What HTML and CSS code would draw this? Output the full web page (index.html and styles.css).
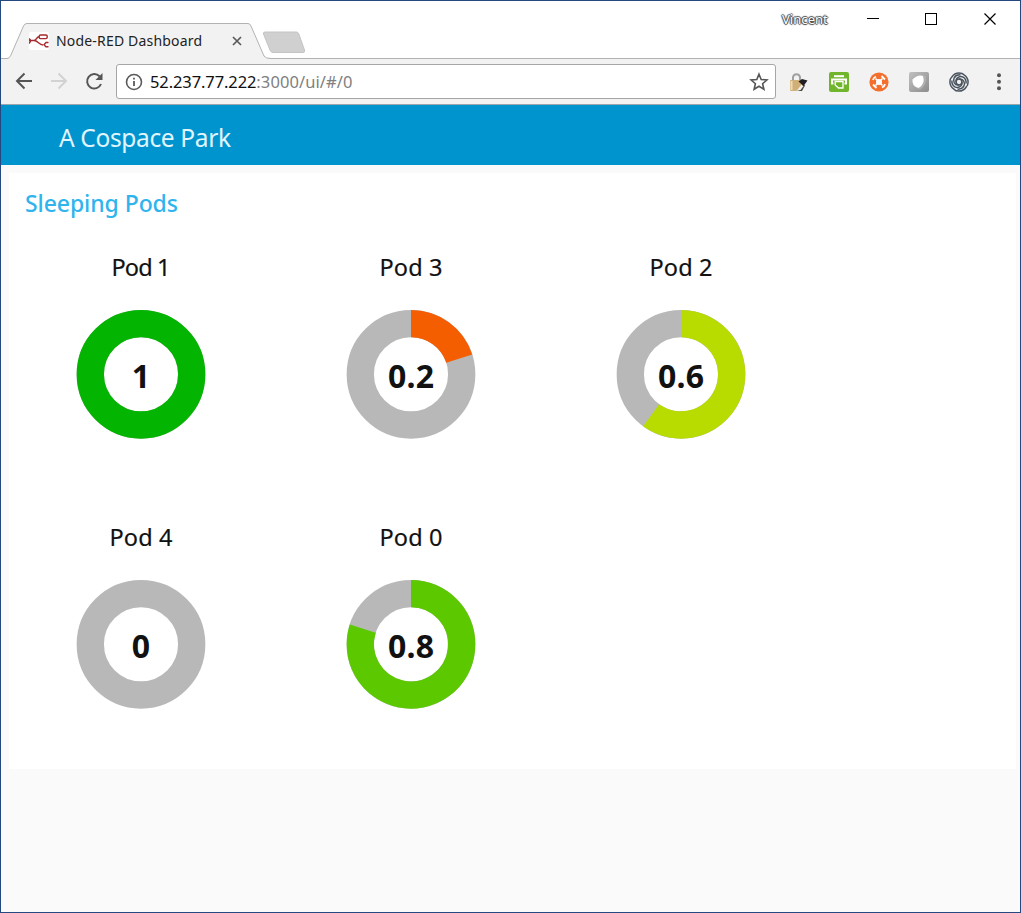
FILE: index.html
```html
<!DOCTYPE html>
<html lang="en">
<head>
<meta charset="utf-8">
<title>Node-RED Dashboard</title>
<link rel="stylesheet" href="styles.css">
</head>
<body>
<div class="window">
  <div class="titlebar">
    <div class="tab">
      <svg class="tab-shape" width="264" height="36" viewBox="0 0 264 36"><path d="M0 36V35.500Q2 35.500 3.500 33L16.500 3Q17.500 .5 20 .5H241Q243 .5 244 3L257 33Q258.500 35.500 264 35.500V36Z" fill="#f2f2f2"/><path d="M0 35.500Q2 35.500 3.500 33L16.500 3Q17.500 .5 20 .5H241Q243 .5 244 3L257 33Q258.500 35.500 264 35.500" fill="none" stroke="#b2b2b2"/></svg>
      <svg class="favicon" width="20" height="18" viewBox="0 0 20 18"><rect width="20" height="18" rx="2" fill="#fff"/><g fill="none" stroke="#a62a2e" stroke-width="1.400"><rect x="10.200" y="3" width="8" height="3.600" rx="1.300"/><path d="M0 8.500H5C8 8.500 7 4.800 10.200 4.800M5 8.500C9 8.500 10 13 14 13M0 6.500l2 2-2 3M19.500 10.500H17l-2 2.200 2 2H19.500"/></g></svg>
      <span class="tab-title">Node-RED Dashboard</span>
      <svg class="tab-close" width="10" height="10" viewBox="0 0 10 10"><path d="M1 1l8 8M9 1l-8 8" stroke="#5a5a5a" stroke-width="1.700"/></svg>
    </div>
    <svg class="new-tab" width="44" height="23" viewBox="0 0 44 23"><path d="M3 1H34.500Q36 1 36.800 3L42.500 19Q43.300 21.500 41 21.500H11Q9 21.500 8.200 19.500L1.500 3Q1 1 3 1Z" fill="#d0d0d0" stroke="#c4c4c4"/></svg>
    <span class="profile">Vincent</span>
    <svg class="controls" width="134" height="14" viewBox="0 0 134 14" fill="none" stroke="#000"><path d="M0 6.500H12"/><rect x="58.500" y="1.500" width="11" height="11"/><path d="M117.500 1.500l11 11M128.500 1.500l-11 11" stroke-width="1.200"/></svg>
  </div>
  <div class="toolbar">
    <svg class="nav" width="90" height="20" viewBox="0 0 90 20" fill="none" stroke-width="2"><path d="M17 9H2.500M9.500 1.500L2 9l7.500 7.500" stroke="#555"/><path d="M36 9H50.500M43.500 1.500L51 9l-7.500 7.500" stroke="#d2d2d2"/><path d="M86 12A7.200 7.200 0 1 1 84.500 4.300" stroke="#555"/><path d="M87.500 1V8H80.500Z" fill="#555"/></svg>
    <div class="address">
      <svg class="info" width="18" height="18" viewBox="0 0 18 18"><circle cx="9" cy="9" r="7.500" fill="none" stroke="#5a5a5a" stroke-width="1.600"/><path d="M9 8V13M9 4.700V6.600" stroke="#5a5a5a" stroke-width="1.800"/></svg>
      <span class="url">52.237.77.222<span class="path">:3000/ui/#/0</span></span>
      <svg class="star" width="20" height="20" viewBox="0 0 20 20"><path d="M10 2.200l2.200 5.300 5.700.5-4.300 3.700 1.300 5.600L10 14.300l-4.900 3 1.300-5.600L2.100 8l5.700-.5Z" fill="none" stroke="#555" stroke-width="1.600"/></svg>
    </div>
    <div class="extensions">
      <svg width="20" height="20" viewBox="0 0 20 20"><path d="M4 9V5A3.700 4 0 0 1 11 5V9" fill="none" stroke="#a0a0a0" stroke-width="2"/><rect x="1" y="8" width="12" height="11" rx="1" fill="#d0b078"/><path d="M2.500 9V18" stroke="#eedcb5" stroke-width="2"/><path d="M8 19L14 11.500l2 2-3 5.500Z" fill="#4a4844"/><path d="M7.500 19l5-6.500 2 1.500-3 4Z" fill="#f3efe2"/><path d="M9.500 9.500l5 4.500 4-5.500-5.500-1.500Z" fill="#202020"/></svg>
      <svg width="20" height="20" viewBox="0 0 20 20"><rect width="20" height="20" rx="2" fill="#70b52b"/><path d="M5 4.200H15" stroke="#fff" stroke-width="2"/><path d="M4.500 11.500H3V7.500H17V11.500H15.500" fill="none" stroke="#fff" stroke-width="2"/><path d="M6.200 9.500H14V16H9.500L6.200 13Z" fill="#70b52b" stroke="#fff" stroke-width="1.300"/></svg>
      <svg width="20" height="20" viewBox="0 0 20 20"><circle cx="10" cy="10" r="9.600" fill="#f36f2b"/><circle cx="10" cy="10" r="3" fill="#fff"/><path d="M6.500 6.500l7 7M13.500 6.500l-7 7" stroke="#fff" stroke-width="1.600"/><path d="M4 8Q4.500 5.500 7 4.500M12.500 4L16 7.500M4 12.500L7.500 16M13 15.500Q15.500 14.500 16 12" fill="none" stroke="#fff" stroke-width="1.800"/></svg>
      <svg width="20" height="20" viewBox="0 0 20 20"><defs><linearGradient id="shade" x2="1" y2="1"><stop stop-color="#c0c0c0"/><stop offset="1" stop-color="#8c8c8c"/></linearGradient></defs><rect width="20" height="20" rx="2" fill="url(#shade)"/><path d="M3 8Q8 1 17 4Q18 13 11 17.500Q3 16 3 8Z" fill="#b0b0b0"/><path d="M3.500 7.500Q9 2 14 4Q16.500 12 9.500 16Q2.500 14 3.500 7.500Z" fill="#fff"/></svg>
      <svg width="20" height="20" viewBox="0 0 20 20" fill="none" stroke="#4b555f" stroke-width="1.500"><circle cx="10" cy="10" r="2.900"/><path d="M10 .9Q13.500 .9 15 2.800Q19.100 5.500 19.100 10Q19.100 13.500 17.200 15Q14.500 19.100 10 19.100Q6.500 19.100 5 17.200Q.9 14.500 .9 10Q.9 6.500 2.800 5Q5.500 .9 10 .9Z"/><path id="arm" d="M7.100 10C6.300 5.500 11 3.500 14.200 5.200C16.200 6.300 17.300 8.500 17.100 11.500"/><use href="#arm" transform="rotate(90 10 10)"/><use href="#arm" transform="rotate(180 10 10)"/><use href="#arm" transform="rotate(270 10 10)"/></svg>
      <svg class="menu" width="6" height="20" viewBox="0 0 6 20" fill="#555"><circle cx="3" cy="3.200" r="2"/><circle cx="3" cy="9.700" r="2"/><circle cx="3" cy="16.200" r="2"/></svg>
    </div>
  </div>
  <header class="app-header"><h1>A Cospace Park</h1></header>
  <main class="page">
    <section class="card">
      <h2>Sleeping Pods</h2>
      <div class="gauges">
        <svg class="gauge" viewBox="0 0 258 258"><text class="label" x="129" y="34" textLength="59">Pod 1</text><circle class="ring" cx="129" cy="132.300" r="50.700"/><circle class="value" cx="129" cy="132.300" r="50.700" stroke="#03b500"/><text class="number" x="129" y="146">1</text></svg>
        <svg class="gauge" viewBox="0 0 258 258"><text class="label" x="129" y="34" textLength="63">Pod 3</text><circle class="ring" cx="129" cy="132.300" r="50.700"/><path class="value" d="M129 81.600A50.700 50.700 0 0 1 177.220 116.630" stroke="#f45d00"/><text class="number" x="129" y="146" textLength="46">0.2</text></svg>
        <svg class="gauge" viewBox="0 0 258 258"><text class="label" x="129" y="34" textLength="63">Pod 2</text><circle class="ring" cx="129" cy="132.300" r="50.700"/><path class="value" d="M129 81.600A50.700 50.700 0 1 1 99.200 173.320" stroke="#b8db00"/><text class="number" x="129" y="146" textLength="46">0.6</text></svg>
        <svg class="gauge" viewBox="0 0 258 258"><text class="label" x="129" y="34" textLength="63">Pod 4</text><circle class="ring" cx="129" cy="132.300" r="50.700"/><text class="number" x="129" y="146">0</text></svg>
        <svg class="gauge" viewBox="0 0 258 258"><text class="label" x="129" y="34" textLength="63">Pod 0</text><circle class="ring" cx="129" cy="132.300" r="50.700"/><path class="value" d="M129 81.600A50.700 50.700 0 1 1 80.780 116.630" stroke="#5cc900"/><text class="number" x="129" y="146" textLength="46">0.8</text></svg>
      </div>
    </section>
  </main>
</div>
</body>
</html>
```

FILE: styles.css
```css
* { box-sizing: border-box; }
body { margin: 0; font-family: "Noto Sans", "Open Sans", sans-serif; }
svg { display: block; flex: none; }
.window {
  display: flex;
  flex-direction: column;
  width: 1021px;
  height: 913px;
  border: 1px solid #24487f;
  background: #fff;
  overflow: hidden;
}
.titlebar {
  display: flex;
  height: 58px;
  padding-top: 22px;
  box-shadow: inset 0 -1px #b2b2b2;
}
.tab {
  position: relative;
  display: flex;
  align-items: center;
  width: 258px;
  height: 36px;
  margin-left: 6px;
  padding-left: 22px;
}
.tab-shape { position: absolute; left: 0; top: 0; }
.favicon, .tab-title, .tab-close { position: relative; }
.tab-title {
  width: 148px;
  margin: -2px 0 0 7px;
  font-size: 14px;
  letter-spacing: 0.18px;
  color: #222;
  white-space: nowrap;
}
.tab-close { margin-left: 28px; }
.new-tab { margin: 8px 0 0 -3px; }
.profile {
  margin: -14px 0 0 476px;
  width: 48px;
  font-size: 13px;
  line-height: 20px;
  letter-spacing: 0.05px;
  color: #fff;
  text-shadow: 1px 0 1px #444, -1px 0 1px #444, 0 1px 1px #444, 0 -1px 1px #444;
}
.controls { margin: -11px 0 0 37px; }
.toolbar {
  display: flex;
  align-items: center;
  height: 46px;
  background: #f2f2f2;
  border-bottom: 1px solid #9aa6ab;
}
.nav { margin-left: 14px; }
.address {
  display: flex;
  align-items: center;
  width: 660px;
  height: 35px;
  margin-left: 11px;
  padding: 0 6px 0 8px;
  background: #fff;
  border: 1px solid #a6a6a6;
  border-radius: 3px;
}
.url {
  margin: -1px 0 0 7px;
  font-size: 16.500px;
  letter-spacing: -0.1px;
  color: #111;
  white-space: nowrap;
}
.path { color: #808080; letter-spacing: 0.08px; }
.star { margin-left: auto; }
.extensions {
  display: flex;
  align-items: center;
  gap: 20px;
  margin-left: 12.500px;
}
.extensions .menu { margin-left: 7px; }
.app-header {
  display: flex;
  align-items: center;
  height: 60px;
  padding: 4px 0 0 58px;
  background: #0094ce;
}
h1 {
  margin: 0;
  font-size: 24.500px;
  font-weight: 400;
  letter-spacing: -0.35px;
  color: #e1f5fd;
}
.page {
  flex: 1;
  padding: 8px 4px 0 8px;
  background: #fafafa;
}
.card {
  height: 596px;
  padding: 12px 3px 0;
  background: #fff;
}
h2 {
  margin: 0 0 21px 13px;
  font-size: 23px;
  line-height: 36px;
  font-weight: 500;
  letter-spacing: -0.08px;
  color: #2fb4ee;
}
.gauges {
  display: grid;
  grid-template-columns: repeat(3, 258px);
  gap: 12px;
}
.gauge { width: 258px; height: 258px; }
.ring, .value { fill: none; stroke-width: 27.300px; }
.ring { stroke: #b8b8b8; }
.label {
  font-size: 23.500px;
  font-weight: 400;
  text-anchor: middle;
  fill: #111;
  stroke: #111;
  stroke-width: 0.2px;
}
.number {
  font-size: 32px;
  font-weight: 700;
  text-anchor: middle;
  fill: #111;
}
```
